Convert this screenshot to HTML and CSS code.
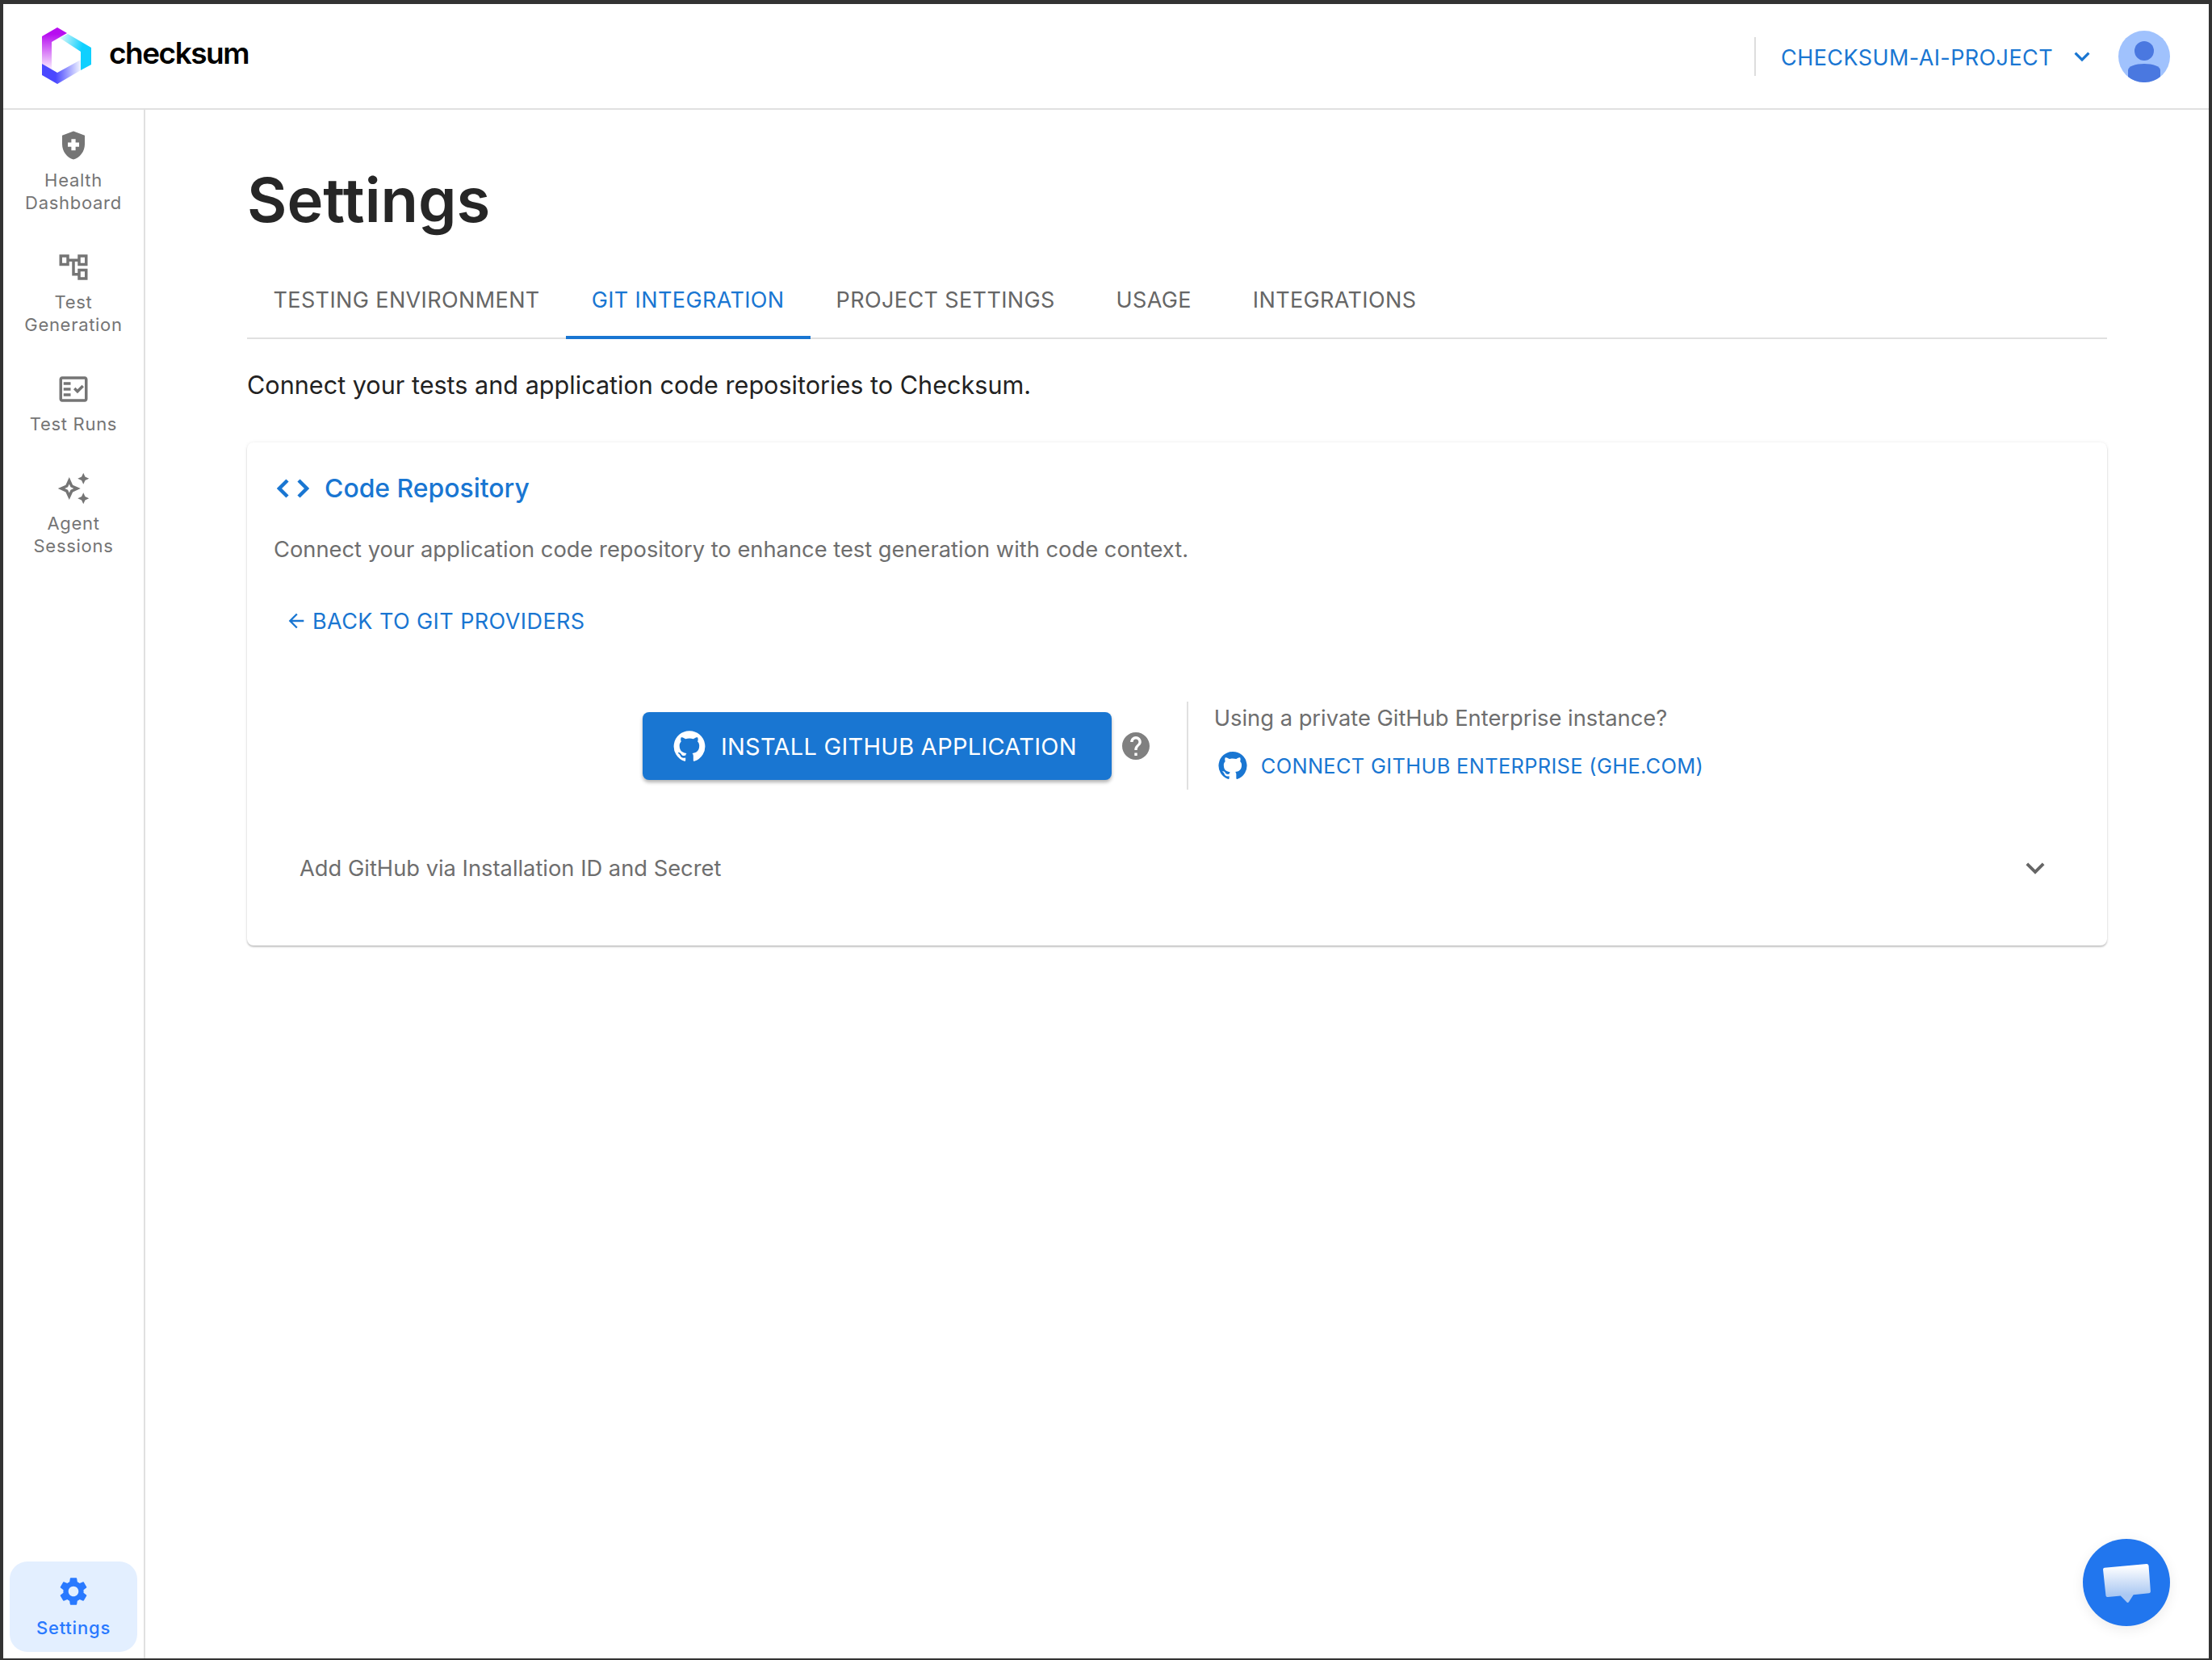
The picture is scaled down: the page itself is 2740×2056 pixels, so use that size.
FILE: index.html
```html
<!DOCTYPE html>
<html lang="en">
<head>
  <meta charset="UTF-8">
  <title>Checksum - Settings</title>
  <link rel="stylesheet" href="styles.css">
</head>
<body>
  <div class="app">
    <header class="topbar">
      <div class="brand">
        <svg class="logo" viewBox="52 35 61 70">
          <defs>
            <linearGradient id="logoPurple" x1="0" y1="0" x2="0" y2="1">
              <stop offset="0.15" stop-color="#b70df0"/>
              <stop offset="1" stop-color="#ffffff"/>
            </linearGradient>
            <linearGradient id="logoCyan" x1="0" y1="0" x2="1" y2="0.35">
              <stop offset="0" stop-color="#e8faf6"/>
              <stop offset="0.75" stop-color="#0fd0ff"/>
            </linearGradient>
            <linearGradient id="logoBlue" x1="0" y1="0" x2="1" y2="0">
              <stop offset="0.35" stop-color="#4a48ff"/>
              <stop offset="1" stop-color="#f2f6ff"/>
            </linearGradient>
          </defs>
          <polygon fill="url(#logoPurple)" points="71,35 83,42 64,53 64,90 52,80 52,46"/>
          <polygon fill="url(#logoCyan)" points="74,48 84,43 113,60 113,81 100,88 100,65"/>
          <polygon fill="url(#logoBlue)" points="52,80 71,91 100,75 100,88 71,105 52,94"/>
        </svg>
        <span class="wordmark">checksum</span>
      </div>
      <div class="project">
        <span class="project-name">CHECKSUM-AI-PROJECT</span>
        <svg class="project-arrow" viewBox="0 0 24 24"><path d="M7.41 8.59 12 13.17l4.59-4.58L18 10l-6 6-6-6 1.41-1.41z"/></svg>
        <svg class="avatar" viewBox="0 0 64 64">
          <circle cx="32" cy="32" r="32" fill="#a0c2fd"/>
          <ellipse cx="32" cy="25" rx="12" ry="12" fill="#4a78e0"/>
          <path d="M12 49c0-5 9-8 20-8s20 3 20 8v8A32 32 0 0 1 12 57z" fill="#4a78e0"/>
        </svg>
      </div>
    </header>

    <div class="layout">
      <nav class="sidebar">
        <a class="nav-item">
          <svg class="nav-icon" viewBox="0 0 24 24"><path d="M10.500 13H8v-3h2.500V7.500h3V10H16v3h-2.500v2.500h-3V13zM12 2 4 5v6.090c0 5.050 3.410 9.760 8 10.910 4.590-1.150 8-5.860 8-10.910V5l-8-3z"/></svg>
          <span>Health<br>Dashboard</span>
        </a>
        <a class="nav-item">
          <svg class="nav-icon" viewBox="0 0 24 24"><path d="M22 11V3h-7v3H9V3H2v8h7V8h2v10h4v3h7v-8h-7v3h-2V8h2v3h7zM7 9H4V5h3v4zm10 6h3v4h-3v-4zm0-10h3v4h-3V5z"/></svg>
          <span>Test<br>Generation</span>
        </a>
        <a class="nav-item">
          <svg class="nav-icon" viewBox="0 0 24 24"><path d="M20 3H4c-1.100 0-2 .9-2 2v14c0 1.100.9 2 2 2h16c1.100 0 2-.9 2-2V5c0-1.100-.9-2-2-2zm0 16H4V5h16v14z"/><path d="M19.410 10.420 17.990 9l-3.170 3.170-1.410-1.420L12 12.170 14.820 15zM5 7h5v2H5zm0 4h5v2H5zm0 4h5v2H5z"/></svg>
          <span>Test Runs</span>
        </a>
        <a class="nav-item">
          <svg class="nav-icon" viewBox="0 0 24 24"><path d="m19 9 1.250-2.750L23 5l-2.750-1.250L19 1l-1.250 2.750L15 5l2.750 1.250L19 9zm-7.500.5L9 4 6.500 9.500 1 12l5.500 2.500L9 20l2.500-5.500L17 12l-5.500-2.500zM9.990 12.990 9 15.170l-.99-2.180L5.830 12l2.180-.99L9 8.830l.99 2.180 2.180.99-2.180.99zM19 15l-1.250 2.750L15 19l2.750 1.250L19 23l1.250-2.750L23 19l-2.750-1.250L19 15z"/></svg>
          <span>Agent<br>Sessions</span>
        </a>
        <a class="nav-item nav-item-active">
          <svg class="nav-icon" viewBox="0 0 24 24"><path d="M19.140 12.940c.04-.3.06-.61.06-.94 0-.32-.02-.64-.07-.94l2.030-1.580c.18-.14.23-.41.12-.61l-1.920-3.320c-.12-.22-.37-.29-.59-.22l-2.390.96c-.5-.38-1.030-.7-1.620-.94l-.36-2.540c-.04-.24-.24-.41-.48-.41h-3.840c-.24 0-.43.17-.47.41l-.36 2.540c-.59.24-1.130.57-1.620.94l-2.390-.96c-.22-.08-.47 0-.59.22L2.740 8.870c-.12.21-.08.47.12.61l2.030 1.580c-.05.3-.09.63-.09.94s.02.64.07.94l-2.030 1.580c-.18.14-.23.41-.12.61l1.920 3.320c.12.22.37.29.59.22l2.390-.96c.5.38 1.030.7 1.620.94l.36 2.540c.05.24.24.41.48.41h3.840c.24 0 .44-.17.47-.41l.36-2.540c.59-.24 1.130-.56 1.620-.94l2.390.96c.22.08.47 0 .59-.22l1.920-3.320c.12-.22.07-.47-.12-.61l-2.010-1.580zM12 15.600c-1.980 0-3.600-1.620-3.600-3.600s1.620-3.600 3.600-3.600 3.600 1.620 3.600 3.600-1.620 3.600-3.600 3.600z"/></svg>
          <span>Settings</span>
        </a>
      </nav>

      <main class="content">
        <h1>Settings</h1>
        <div class="tabs">
          <a class="tab">TESTING ENVIRONMENT</a>
          <a class="tab tab-active">GIT INTEGRATION</a>
          <a class="tab">PROJECT SETTINGS</a>
          <a class="tab">USAGE</a>
          <a class="tab">INTEGRATIONS</a>
        </div>
        <p class="intro">Connect your tests and application code repositories to Checksum.</p>

        <section class="card">
          <div class="card-title">
            <svg class="code-icon" viewBox="0 0 40 24"><path d="M13 2 3 12l10 10M27 2l10 10-10 10"/></svg>
            <h2>Code Repository</h2>
          </div>
          <p class="card-desc">Connect your application code repository to enhance test generation with code context.</p>
          <a class="back-link">
            <svg class="back-arrow" viewBox="0 0 24 24"><path d="M20 11H7.830l5.590-5.590L12 4l-8 8 8 8 1.410-1.410L7.830 13H20v-2z"/></svg>
            BACK TO GIT PROVIDERS
          </a>

          <div class="install-row">
            <a class="install-btn">
              <svg class="gh-icon" viewBox="0 0 24 24"><path d="M12 1.270a11 11 0 0 0-3.480 21.460c.55.09.73-.28.73-.55v-1.840c-3.030.64-3.670-1.460-3.670-1.460-.55-1.290-1.280-1.650-1.280-1.650-.92-.65.1-.65.1-.65 1.100 0 1.730 1.100 1.730 1.100.92 1.650 2.570 1.200 3.210.92a2 2 0 0 1 .64-1.470c-2.470-.27-5.040-1.190-5.040-5.500 0-1.100.46-2.100 1.200-2.840a3.760 3.760 0 0 1 0-2.930s.91-.28 3.110 1.100c1.800-.49 3.700-.49 5.500 0 2.100-1.380 3.020-1.100 3.020-1.100a3.760 3.760 0 0 1 0 2.930c.83.74 1.200 1.740 1.200 2.940 0 4.210-2.570 5.130-5.040 5.400.45.37.82.92.82 2.020v3.030c0 .27.1.64.73.55A11 11 0 0 0 12 1.270"/></svg>
              <span class="install-label">INSTALL GITHUB APPLICATION</span>
            </a>
            <svg class="help-icon" viewBox="2 2 20 20"><path d="M12 2C6.480 2 2 6.480 2 12s4.480 10 10 10 10-4.480 10-10S17.520 2 12 2zm1 17h-2v-2h2v2zm2.070-7.750-.9.92C13.450 12.900 13 13.500 13 15h-2v-.5c0-1.100.45-2.100 1.170-2.830l1.240-1.260c.37-.36.59-.86.59-1.410 0-1.100-.9-2-2-2s-2 .9-2 2H8c0-2.210 1.790-4 4-4s4 1.790 4 4c0 .88-.36 1.680-.93 2.250z"/></svg>
            <div class="enterprise">
              <p>Using a private GitHub Enterprise instance?</p>
              <a class="enterprise-link">
                <svg class="gh-icon gh-icon-blue" viewBox="0 0 24 24"><path d="M12 1.270a11 11 0 0 0-3.480 21.460c.55.09.73-.28.73-.55v-1.840c-3.030.64-3.670-1.460-3.670-1.460-.55-1.290-1.280-1.650-1.280-1.650-.92-.65.1-.65.1-.65 1.100 0 1.730 1.100 1.730 1.100.92 1.650 2.570 1.200 3.210.92a2 2 0 0 1 .64-1.470c-2.470-.27-5.040-1.190-5.040-5.500 0-1.100.46-2.100 1.200-2.840a3.760 3.760 0 0 1 0-2.930s.91-.28 3.110 1.100c1.800-.49 3.700-.49 5.500 0 2.100-1.380 3.020-1.100 3.020-1.100a3.760 3.760 0 0 1 0 2.930c.83.74 1.200 1.740 1.200 2.940 0 4.210-2.570 5.130-5.040 5.400.45.37.82.92.82 2.020v3.030c0 .27.1.64.73.55A11 11 0 0 0 12 1.270"/></svg>
                CONNECT GITHUB ENTERPRISE (GHE.COM)
              </a>
            </div>
          </div>

          <div class="accordion">
            <span>Add GitHub via Installation ID and Secret</span>
            <svg class="accordion-arrow" viewBox="0 0 24 24"><path d="M7.410 8.590 12 13.170l4.590-4.580L18 10l-6 6-6-6 1.410-1.410z"/></svg>
          </div>
        </section>
      </main>
    </div>

    <a class="chat-btn">
      <svg viewBox="0 0 64 56">
        <defs>
          <linearGradient id="bubble" x1="0" y1="0" x2="0" y2="1">
            <stop offset="0.05" stop-color="#ffffff"/>
            <stop offset="0.8" stop-color="#aac8f2"/>
          </linearGradient>
        </defs>
        <path fill="url(#bubble)" d="M4 6 58 1c1.500 0 2.500 1 2.600 2.500L63 36c.1 1.500-.7 2.500-2 2.600l-20 2L35 50c-.8 1-2 1-2.700.1L24.500 42 8 43.500c-1.500.1-2.400-.7-2.500-2L2 8.500C1.900 7 2.700 6.100 4 6z"/>
      </svg>
    </a>
  </div>
</body>
</html>
```

FILE: styles.css
```css
* {
  box-sizing: border-box;
}
html, body {
  height: 100%;
}
body {
  margin: 0;
  padding: 5px 4px 2px 4px;
  background-color: #333;
  font-family: Inter, "Liberation Sans", sans-serif;
  overflow: hidden;
}
a {
  text-decoration: none;
}
p, h1, h2 {
  margin: 0;
}
.app {
  position: relative;
  display: flex;
  flex-direction: column;
  height: 100%;
  background-color: #fff;
}

/* top bar */
.topbar {
  display: flex;
  align-items: center;
  justify-content: space-between;
  flex: none;
  height: 131px;
  padding: 0 48px;
  border-bottom: 2px solid #e0e0e0;
}
.brand {
  display: flex;
  align-items: center;
  gap: 22px;
  margin-top: -2px;
}
.logo {
  width: 61px;
  height: 70px;
}
.wordmark {
  font-size: 37px;
  font-weight: 600;
  letter-spacing: -1.5px;
  color: #000;
  margin-bottom: 6px;
}
.project {
  display: flex;
  align-items: center;
  height: 48px;
  padding-left: 31px;
  border-left: 2px solid #ddd;
}
.project-name {
  padding-top: 3px;
  font-size: 27px;
  letter-spacing: 0.4px;
  color: #1976d2;
}
.project-arrow {
  width: 38px;
  height: 38px;
  margin-left: 17px;
  fill: #1976d2;
}
.avatar {
  width: 64px;
  height: 64px;
  margin-left: 26px;
}

/* sidebar */
.layout {
  display: flex;
  flex: 1;
  min-height: 0;
}
.sidebar {
  display: flex;
  flex-direction: column;
  flex: none;
  width: 176px;
  padding: 23px 8px 8px 8px;
  border-right: 2px solid #e0e0e0;
}
.nav-item {
  display: flex;
  flex-direction: column;
  align-items: center;
  margin-bottom: 45px;
  font-size: 22px;
  line-height: 28px;
  letter-spacing: 0.7px;
  text-align: center;
  color: #757575;
}
.nav-icon {
  width: 42px;
  height: 42px;
  margin-bottom: 8px;
  fill: #757575;
}
.nav-item-active {
  margin-top: auto;
  margin-bottom: 0;
  padding: 16px 0;
  border-radius: 22px;
  background-color: #e3efff;
  font-weight: 500;
  letter-spacing: 0.8px;
  color: #2979ff;
}
.nav-item-active .nav-icon {
  margin-bottom: 10px;
  fill: #2979ff;
}

/* main */
.content {
  flex: 1;
  min-width: 0;
  padding: 66px 126px 0 126px;
}
h1 {
  font-size: 76px;
  font-weight: 600;
  line-height: 91px;
  color: #262626;
  margin-bottom: 43px;
}
.tabs {
  display: flex;
  height: 84px;
  margin-bottom: 37px;
  padding-left: 0.5px;
  border-bottom: 2px solid #e0e0e0;
}
.tab {
  display: flex;
  align-items: center;
  justify-content: center;
  min-width: 181px;
  height: 84px;
  padding: 0 32px 14px 32px;
  font-size: 27px;
  letter-spacing: 0.38px;
  color: #666;
}
.tab-active {
  padding-bottom: 10px;
  color: #1976d2;
  border-bottom: 4px solid #1976d2;
}
.intro {
  font-size: 30.6px;
  line-height: 40px;
  color: #222;
  margin-bottom: 51px;
}

/* card */
.card {
  padding: 37px 33px 57px 33px;
  border-radius: 8px;
  background-color: #fff;
  box-shadow: 0 2px 2px rgba(0,0,0,0.2), 0 0 4px rgba(0,0,0,0.08);
}
.card-title {
  display: flex;
  align-items: center;
  height: 40px;
  margin-bottom: 36px;
  color: #1976d2;
}
.code-icon {
  width: 40px;
  height: 24px;
  margin: 0 19px 0 4px;
  fill: none;
  stroke: #1976d2;
  stroke-width: 4.5;
}
h2 {
  font-size: 31.9px;
  font-weight: 500;
  line-height: 40px;
}
.card-desc {
  font-size: 27.3px;
  line-height: 40px;
  color: #6e6e6e;
  margin-bottom: 48px;
}
.back-link {
  display: flex;
  align-items: center;
  height: 40px;
  padding-left: 14px;
  font-size: 27px;
  letter-spacing: 0.42px;
  color: #1976d2;
}
.back-arrow {
  width: 28px;
  height: 28px;
  margin-right: 6px;
  fill: #1976d2;
}
.install-row {
  display: flex;
  align-items: center;
  justify-content: center;
  height: 109px;
  margin-top: 80px;
  margin-bottom: 58px;
  padding-right: 10px;
}
.install-btn {
  display: flex;
  align-items: center;
  gap: 18px;
  height: 84px;
  padding: 0 43px 0 37px;
  border-radius: 8px;
  background-color: #1976d2;
  box-shadow: 0 3px 4px rgba(0,0,0,0.3);
  font-size: 29px;
  letter-spacing: 0.27px;
  color: #fff;
}
.install-label {
  padding-top: 2px;
}
.gh-icon {
  width: 42px;
  height: 42px;
  fill: #fff;
}
.gh-icon-blue {
  width: 38px;
  height: 38px;
  fill: #1976d2;
}
.help-icon {
  flex: none;
  width: 34px;
  height: 34px;
  margin-left: 13px;
  fill: #808080;
}
.enterprise {
  display: flex;
  flex-direction: column;
  justify-content: center;
  height: 109px;
  margin-left: 46px;
  padding: 0 0 9px 32px;
  border-left: 2px solid #e0e0e0;
}
.enterprise p {
  font-size: 27.3px;
  line-height: 40px;
  color: #6e6e6e;
  margin-bottom: 18px;
}
.enterprise-link {
  display: flex;
  align-items: center;
  gap: 16px;
  height: 40px;
  padding-left: 4px;
  font-size: 25.4px;
  letter-spacing: 0.34px;
  color: #1976d2;
}
.accordion {
  display: flex;
  align-items: center;
  justify-content: space-between;
  height: 78px;
  padding: 0 33px 0 32px;
  font-size: 27.3px;
  color: #6e6e6e;
}
.accordion-arrow {
  width: 46px;
  height: 46px;
  fill: #666;
}

/* chat launcher */
.chat-btn {
  position: absolute;
  right: 48px;
  bottom: 40px;
  display: flex;
  align-items: center;
  justify-content: center;
  width: 108px;
  height: 108px;
  border-radius: 50%;
  background-color: #2176ee;
  box-shadow: 0 4px 16px rgba(0,0,0,0.08);
}
.chat-btn svg {
  width: 62px;
  height: 54px;
  margin-top: 6px;
}
```
